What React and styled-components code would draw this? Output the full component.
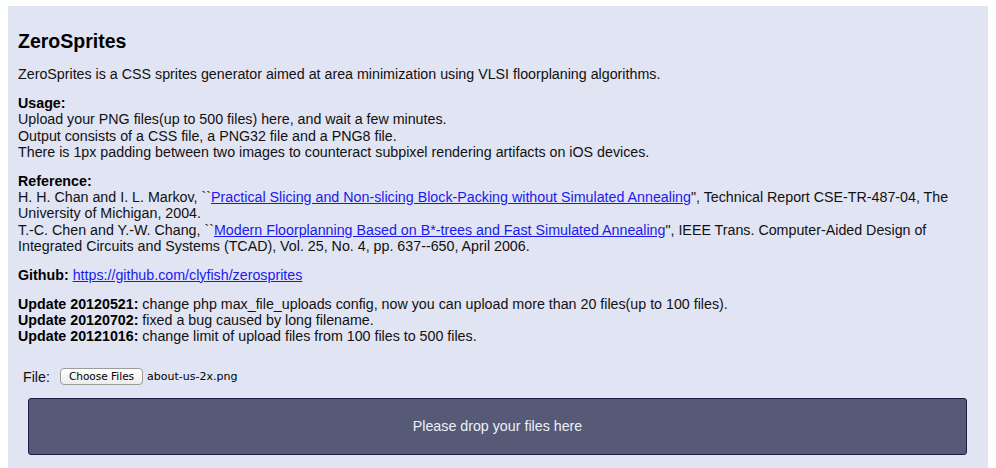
import { styled, createGlobalStyle } from "styled-components";

const GlobalStyle = createGlobalStyle`
  body {
    margin: 6px 8px 0;
    background: #ffffff;
    font-family: "Liberation Sans", Arial, sans-serif;
    color: #111111;
  }
`;

//Styled Components
const Panel = styled.div`
  background-color: #e1e4f3;
  padding: 24px 10px 30px;
`;

const Title = styled.h2`
  margin: 0 0 14px;
  font-size: 19.5px;
  line-height: 22px;
  font-weight: bold;
  color: #000000;
`;

const Para = styled.p`
  margin: 0 0 12.75px;
  font-size: 14.25px;
  line-height: 16.25px;
`;

const Label = styled.b`
  font-weight: bold;
  color: #000000;
`;

const Link = styled.a`
  color: #1a1af0;
  text-decoration: underline;
`;

const FileRow = styled.div`
  display: flex;
  align-items: center;
  height: 20px;
  margin-top: 22.25px;
  padding-left: 5px;
  font-size: 14.25px;
`;

const FileLabel = styled.span`
  margin-right: 10px;
`;

const ChooseButton = styled.button`
  box-sizing: border-box;
  height: 17px;
  padding: 0 8px;
  border: 1px solid #9c9c9c;
  border-radius: 4px;
  background: linear-gradient(#ffffff, #ececec);
  font-family: "DejaVu Sans", sans-serif;
  font-size: 10.5px;
  line-height: 15px;
  color: #000000;
`;

const FileName = styled.span`
  margin-left: 4px;
  font-family: "DejaVu Sans", sans-serif;
  font-size: 11px;
  color: #000000;
`;

const DropZone = styled.div`
  display: flex;
  justify-content: center;
  align-items: center;
  height: 55px;
  margin: 11px 11px 0 10px;
  border: 1px solid #1b1f48;
  border-radius: 3px;
  background-color: #565a76;
  color: #eef0f8;
  font-size: 14.25px;
`;

const App = () => {
  return (
    <>
      <GlobalStyle />
      <Panel>
        <Title>ZeroSprites</Title>
        <Para>
          ZeroSprites is a CSS sprites generator aimed at area minimization
          using VLSI floorplaning algorithms.
        </Para>
        <Para>
          <Label>Usage:</Label>
          <br />
          Upload your PNG files(up to 500 files) here, and wait a few minutes.
          <br />
          Output consists of a CSS file, a PNG32 file and a PNG8 file.
          <br />
          There is 1px padding between two images to counteract subpixel
          rendering artifacts on iOS devices.
        </Para>
        <Para>
          <Label>Reference:</Label>
          <br />
          H. H. Chan and I. L. Markov, ``
          <Link href="#">
            Practical Slicing and Non-slicing Block-Packing without Simulated
            Annealing
          </Link>
          ", Technical Report CSE-TR-487-04, The University of Michigan, 2004.
          <br />
          T.-C. Chen and Y.-W. Chang, ``
          <Link href="#">
            Modern Floorplanning Based on B*-trees and Fast Simulated Annealing
          </Link>
          ", IEEE Trans. Computer-Aided Design of Integrated Circuits and
          Systems (TCAD), Vol. 25, No. 4, pp. 637--650, April 2006.
        </Para>
        <Para>
          <Label>Github:</Label>{" "}
          <Link href="#">https://github.com/clyfish/zerosprites</Link>
        </Para>
        <Para>
          <Label>Update 20120521:</Label> change php max_file_uploads config,
          now you can upload more than 20 files(up to 100 files).
          <br />
          <Label>Update 20120702:</Label> fixed a bug caused by long filename.
          <br />
          <Label>Update 20121016:</Label> change limit of upload files from 100
          files to 500 files.
        </Para>
        <FileRow>
          <FileLabel>File:</FileLabel>
          <ChooseButton>Choose Files</ChooseButton>
          <FileName>about-us-2x.png</FileName>
        </FileRow>
        <DropZone>Please drop your files here</DropZone>
      </Panel>
    </>
  );
};

export default App;
